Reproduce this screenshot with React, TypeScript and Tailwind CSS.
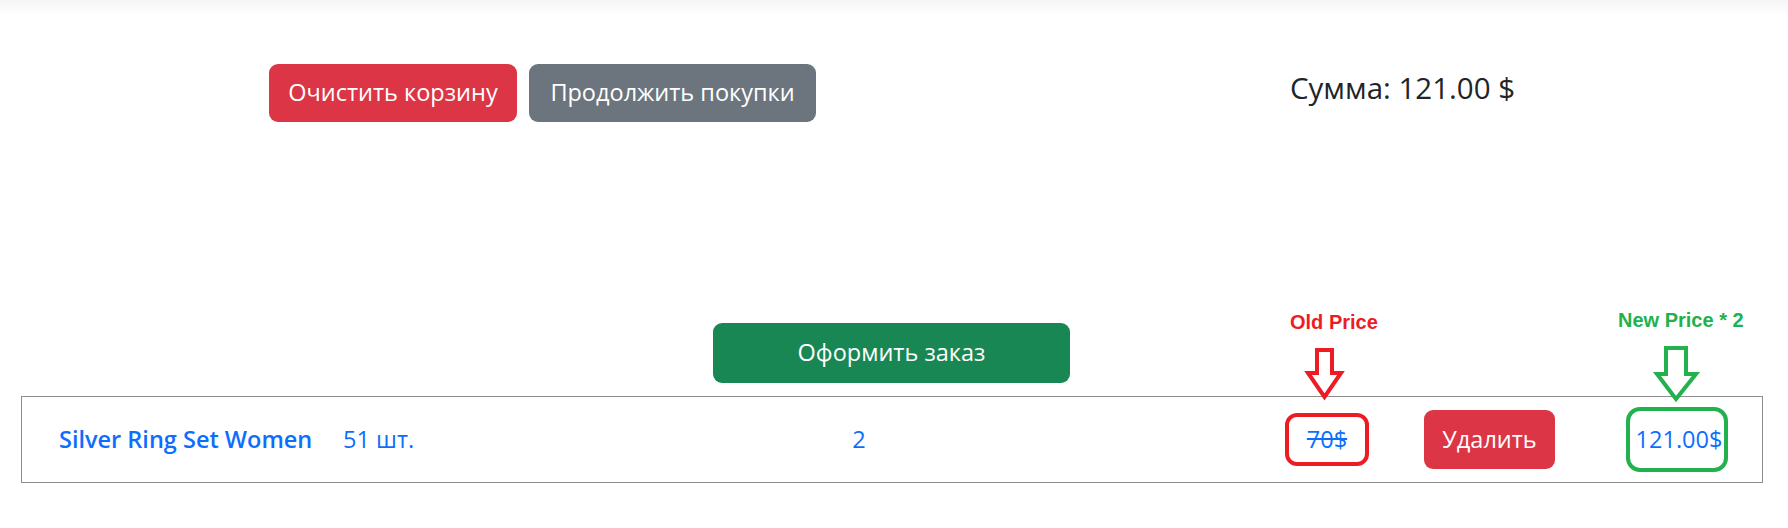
import React from 'react';

const font = { fontFamily: '"Open Sans", "Noto Sans", sans-serif' };
const note = { fontFamily: '"Liberation Sans", sans-serif' };

const Cart: React.FC = () => {
    return (
        <div className="relative w-[1788px] h-[528px] bg-white text-[#212529]" style={font}>
            {/* navbar shadow */}
            <div className="h-4 bg-gradient-to-b from-[#f6f6f6] to-white" />

            {/* actions + total */}
            <div className="flex items-start mt-[48px] pl-[269px] h-[58px]">
                <button className="w-[248px] h-[58px] rounded-[9px] bg-[#dc3545] text-white text-[23.5px]">
                    Очистить корзину
                </button>
                <button className="ml-[12px] w-[287px] h-[58px] rounded-[9px] bg-[#6c757d] text-white text-[23.5px]">
                    Продолжить покупки
                </button>
                <h5 className="ml-[474px] mt-[9px] text-[29.5px] font-medium leading-none">Сумма: 121.00 $</h5>
            </div>

            {/* checkout */}
            <div className="flex pl-[713px] mt-[201px]">
                <button className="w-[357px] h-[60px] rounded-[9px] bg-[#198754] text-white text-[23.5px]">
                    Оформить заказ
                </button>
            </div>

            {/* cart row */}
            <div className="mt-[13px] ml-[21px] w-[1742px] h-[87px] border border-[#8c8c8c] flex items-center text-[#0d6efd] text-[23.5px]">
                <a className="ml-[37px] w-[284px] font-semibold">Silver Ring Set Women</a>
                <span className="w-[500px]">51 шт.</span>
                <span className="w-[32px] text-center">2</span>
                <div className="ml-[410px] w-[84px] h-[53px] border-4 border-[#ed1c24] rounded-[12px] flex items-center justify-center">
                    <span className="line-through">70$</span>
                </div>
                <button className="ml-[55px] w-[131px] h-[59px] rounded-[9px] bg-[#dc3545] text-white">
                    Удалить
                </button>
                <div className="ml-[71px] w-[102px] h-[65px] border-4 border-[#22b14c] rounded-[14px] flex items-center justify-center">
                    <span className="ml-[4px]">121.00$</span>
                </div>
            </div>

            {/* annotations */}
            <span className="absolute left-[1290px] top-[312px] text-[20px] leading-[20px] font-bold text-[#ed1c24]" style={note}>
                Old Price
            </span>
            <svg className="absolute left-[1304px] top-[346px]" width="42" height="56" viewBox="0 0 42 56">
                <polygon points="13,4 28,4 28,27 37,27 20.5,51 4,27 13,27" fill="none" stroke="#ed1c24" strokeWidth="4" />
            </svg>

            <span className="absolute left-[1618px] top-[310px] text-[20px] leading-[20px] font-bold text-[#22b14c]" style={note}>
                New Price * 2
            </span>
            <svg className="absolute left-[1652px] top-[344px]" width="50" height="60" viewBox="0 0 50 60">
                <polygon points="14,4 34,4 34,30 44,30 24,55 5,30 14,30" fill="none" stroke="#22b14c" strokeWidth="4" />
            </svg>
        </div>
    );
};

export default function App() {
    return <Cart />;
}
